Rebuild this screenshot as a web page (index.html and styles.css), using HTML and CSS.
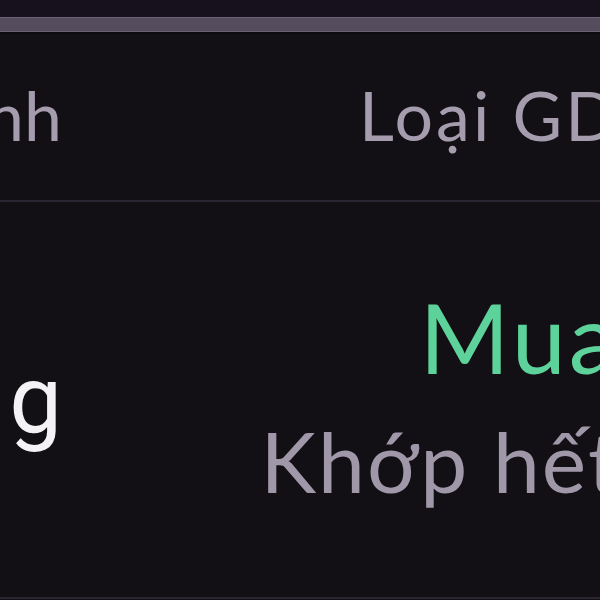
FILE: index.html
```html
<!DOCTYPE html>
<html lang="vi">
<head>
  <meta charset="UTF-8">
  <title>Lệnh khớp</title>
  <link rel="stylesheet" href="styles.css">
</head>
<body>
  <div class="topbar"></div>
  <div class="scrollbar"></div>

  <div class="table">
    <div class="row header-row">
      <div class="cell cell-left">Thời gian khớp lệnh</div>
      <div class="cell cell-right">Loại GD</div>
    </div>

    <div class="row data-row">
      <div class="cell cell-left name">Đang xử lý khớp lệnh đúng</div>
      <div class="cell cell-right">
        <div class="side buy">Mua</div>
        <div class="status">Khớp hết</div>
      </div>
    </div>
  </div>
</body>
</html>
```

FILE: styles.css
```css
html,
body {
  margin: 0;
  background: #131015;
  overflow: hidden;
}

body {
  font-family: Lato, "Noto Sans", sans-serif;
  width: 600px;
  height: 600px;
}

.topbar {
  height: 17px;
  background: #17111e;
}

.scrollbar {
  height: 13px;
  background: #554c5d;
  border-top: 1px solid #6a6172;
  border-bottom: 1px solid #6a6172;
}

.table {
  width: 620px;
  border-top: 2px solid #0e0b10;
}

.row {
  display: grid;
  grid-template-columns: 62px 1fr;
  align-items: center;
  box-sizing: border-box;
  border-bottom: 2px solid #2b2431;
}

.cell {
  white-space: nowrap;
}

.cell-left {
  display: flex;
  justify-content: flex-end;
}

.cell-right {
  display: flex;
  flex-direction: column;
  align-items: flex-end;
}

.header-row {
  height: 168px;
  padding-bottom: 6px;
  color: #a59cae;
  font-size: 68px;
}

.header-row .cell-right {
  letter-spacing: 3px;
}

.data-row {
  height: 397px;
}

.name {
  padding-left: 9px;
  clip-path: inset(0 0 0 9px);
  color: #f4f2f5;
  font-family: Roboto, Lato, sans-serif;
  font-size: 94px;
}

.side {
  font-size: 97px;
  line-height: 1.1;
  letter-spacing: 3px;
}

.buy {
  color: #5dd39b;
}

.status {
  padding-top: 15px;
  color: #a098a9;
  font-size: 84px;
  line-height: 1.3;
  letter-spacing: 2px;
}
```
